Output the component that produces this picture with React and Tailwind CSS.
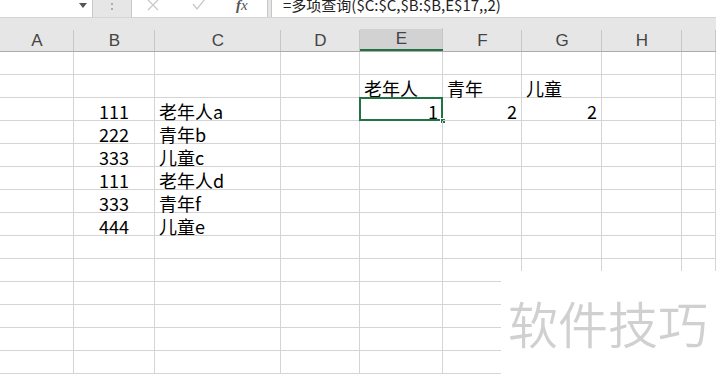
import React from 'react';

const cols = [
  { key: 'A', w: 'w-[74px]' },
  { key: 'B', w: 'w-[81px]' },
  { key: 'C', w: 'w-[126px]' },
  { key: 'D', w: 'w-[79px]' },
  { key: 'E', w: 'w-[83px]' },
  { key: 'F', w: 'w-[79px]' },
  { key: 'G', w: 'w-[80px]' },
  { key: 'H', w: 'w-[80px]' },
  { key: '', w: 'flex-1' },
];

// row index -> { colKey: [text, align] }
const data = {
  1: { E: ['老年人', 'left'], F: ['青年', 'left'], G: ['儿童', 'left'] },
  2: { B: ['111', 'center'], C: ['老年人a', 'left'], E: ['1', 'right'], F: ['2', 'right'], G: ['2', 'right'] },
  3: { B: ['222', 'center'], C: ['青年b', 'left'] },
  4: { B: ['333', 'center'], C: ['儿童c', 'left'] },
  5: { B: ['111', 'center'], C: ['老年人d', 'left'] },
  6: { B: ['333', 'center'], C: ['青年f', 'left'] },
  7: { B: ['444', 'center'], C: ['儿童e', 'left'] },
};

const alignClass = {
  left: 'justify-start pl-[4px]',
  right: 'justify-end pr-[4px]',
  center: 'justify-center',
};

const Cell = ({ col, row }) => {
  const v = data[row] && data[row][col.key];
  const selected = row === 2 && col.key === 'E';
  return (
    <div className={`${col.w} relative h-[23px] shrink-0 border-r border-b border-[#d4d4d4] flex items-end ${v ? alignClass[v[1]] : ''}`}>
      {v && <span className="leading-[18px] text-[18px] text-black">{v[0]}</span>}
      {selected && (
        <>
          <div className="absolute left-[-1px] top-[-1px] w-[84px] h-[24px] border-2 border-[#217346]" />
          <div className="absolute right-[-4px] bottom-[-4px] w-[6px] h-[6px] bg-[#217346] border border-white" />
        </>
      )}
    </div>
  );
};

export default function App() {
  const rows = Array.from({ length: 14 }, (_, i) => i);
  return (
    <div className="w-[716px] h-[378px] overflow-hidden bg-white relative" style={{ fontFamily: '"Noto Sans CJK SC", "Liberation Sans", sans-serif' }}>
      {/* formula bar */}
      <div className="h-[18px] flex bg-[#e6e6e6] border-b border-[#d4d4d4] overflow-hidden">
        <div className="w-[93px] bg-white border-r border-[#c6c6c6] relative">
          <svg className="absolute left-[79px] top-[3px]" width="8" height="5" viewBox="0 0 8 5">
            <path d="M0 0 L8 0 L4 5 Z" fill="#555" />
          </svg>
        </div>
        <div className="w-[38px] flex justify-center">
          <svg width="4" height="14" viewBox="0 0 4 14" className="mt-[1px]">
            <circle cx="2" cy="3" r="1" fill="#999" />
            <circle cx="2" cy="8" r="1" fill="#999" />
          </svg>
        </div>
        <div className="w-[137px] bg-white border-l border-r border-[#c6c6c6] relative">
          <svg className="absolute left-[14px] top-[-2px]" width="14" height="14" viewBox="0 0 14 14">
            <path d="M2 2 L12 12 M12 2 L2 12" stroke="#c8c8c8" strokeWidth="1.3" fill="none" />
          </svg>
          <svg className="absolute left-[59px] top-[-2px]" width="16" height="14" viewBox="0 0 16 14">
            <path d="M2 6 L6 11 L14 1" stroke="#c8c8c8" strokeWidth="1.3" fill="none" />
          </svg>
          <span className="absolute left-[104px] top-[-3px] text-[15px] leading-[16px] italic text-[#555]" style={{ fontFamily: '"Liberation Serif", serif' }}>
            <span className="font-bold">f</span>x
          </span>
        </div>
        <div className="w-[3px]" />
        <div className="flex-1 bg-white border-l border-[#c6c6c6] relative">
          <span className="absolute left-[11px] top-[-5px] text-[15px] leading-[20px] text-[#222] whitespace-nowrap">=多项查询($C:$C,$B:$B,E$17,,2)</span>
        </div>
      </div>
      {/* header gap */}
      <div className="h-[11px] bg-[#e6e6e6]" />
      {/* column headers */}
      <div className="h-[23px] flex bg-[#e6e6e6] border-b border-[#ababab]">
        {cols.map((c, i) => (
          <div
            key={i}
            className={`${c.w} shrink-0 flex items-end justify-center relative ${c.key === 'E' ? 'bg-[#d2d2d2] border-b-2 border-[#217346]' : ''}`}
          >
            <span className="text-[17px] leading-[20px] text-[#444]" style={{ fontFamily: '"Liberation Sans", sans-serif' }}>{c.key}</span>
            <div className="absolute right-0 bottom-0 w-px h-[21px] bg-[#c6c6c6]" />
          </div>
        ))}
      </div>
      {/* grid */}
      {rows.map((r) => (
        <div key={r} className="flex">
          {cols.map((c, i) => (
            <Cell key={i} col={c} row={r} />
          ))}
        </div>
      ))}
      {/* watermark */}
      <div className="absolute left-[501px] top-[271px] w-[215px] h-[107px] bg-white flex items-start">
        <span className="ml-[7px] mt-[22px] text-[50px] leading-[58px] text-[#d0d0d0]" style={{ fontWeight: 350 }}>软件技巧</span>
      </div>
    </div>
  );
}
